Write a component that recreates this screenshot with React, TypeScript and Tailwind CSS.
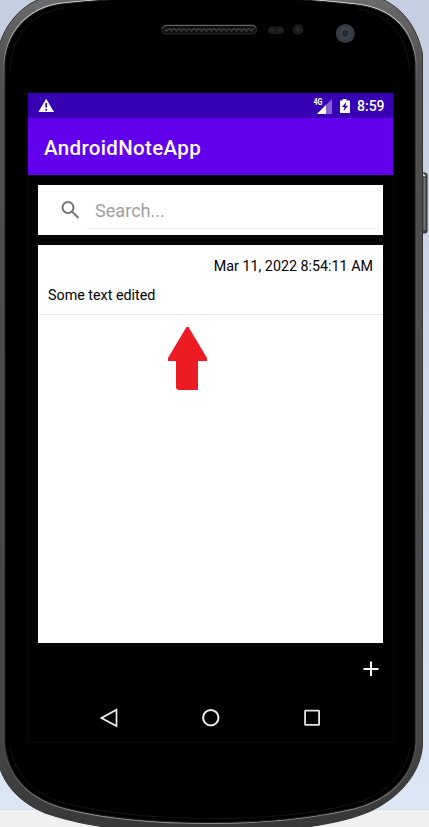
import React from "react";

const OUTER =
  "M-1 46 C5 26 17 10 37 0 C80 -12 120 -14 211 -14 C300 -14 345 -12 384 0 C406 11 418 31 422.5 54 V745 C421 770 404 794 373 810 C345 823 300 831 211 834 C125 833 80 825 45 813 C19 802 5 785 -1 766 Z";
const INNER =
  "M5 62 C8 30 30 8 62 4 C100 0 140 -3 211 -3 C280 -3 320 1 357 5 C391 9 412 29 415 62 V744 C412 778 388 799 354 808 C310 818 265 822.5 211 822.500 C155 822.5 105 818 66 808 C31 799 9 779 5 744 Z";

function PhoneFrame() {
  return (
    <svg className="absolute inset-0" width="429" height="827" viewBox="0 0 429 827" fill="none" aria-hidden="true">
      <defs>
        <linearGradient id="backdrop" x1="0" y1="0" x2="0" y2="1">
          <stop offset="0" stopColor="#c4cee0" />
          <stop offset="1" stopColor="#dce7f5" />
        </linearGradient>
        <linearGradient id="metal" x1="0" y1="0" x2="0" y2="827" gradientUnits="userSpaceOnUse">
          <stop offset="0" stopColor="#6b6b6b" />
          <stop offset="0.08" stopColor="#505050" />
          <stop offset="0.9" stopColor="#454545" />
          <stop offset="1" stopColor="#383838" />
        </linearGradient>
        <linearGradient id="shine" x1="0" y1="0" x2="0" y2="827" gradientUnits="userSpaceOnUse">
          <stop offset="0" stopColor="#d4d4d4" />
          <stop offset="0.05" stopColor="#999" />
          <stop offset="0.1" stopColor="#585858" />
          <stop offset="0.93" stopColor="#545454" />
          <stop offset="0.98" stopColor="#8c8c8c" />
        </linearGradient>
        <pattern id="mesh" width="5" height="4" patternUnits="userSpaceOnUse" x="164" y="28">
          <path d="M0 0l2.5 3L5 0" stroke="#383838" strokeWidth="1.6" />
        </pattern>
      </defs>
      <rect width="429" height="809" fill="url(#backdrop)" />
      <rect y="809" width="429" height="18" fill="#f0f0f0" />
      <path d="M0 809.5H429" stroke="#d5dbe2" />
      <rect x="420" y="173" width="7" height="60" rx="2" fill="#464646" stroke="#303030" />
      <path d="M424.5 178v52" stroke="#737373" strokeWidth="2" />
      <path d="M422 174l3 2" stroke="#ddd" strokeWidth="2" />
      <path d={OUTER} fill="url(#metal)" />
      <path d={OUTER} stroke="#343434" />
      <path d={INNER} fill="#000" stroke="url(#shine)" strokeWidth="3" />
      <path d={INNER} fill="#000" stroke="#191919" strokeWidth="1" />
      <path
        d="M10 70C12 35 33 12 64 8 M358 9C388 14 406 34 410 70 M10 747C15 777 38 797 67 804C112 814 158 818.500 211 818.500C265 818.500 312 814 353 804C384 796 406 775 410 747"
        stroke="#141414"
      />
      <rect x="162" y="25" width="94.500" height="9" rx="4" fill="#101010" stroke="#2b2b2b" />
      <rect x="165" y="28" width="89" height="4" fill="url(#mesh)" />
      <path d="M163 28q1-2.500 4-2.500h85q3 0 4 2.500" stroke="#666" />
      <rect x="268" y="26.500" width="16" height="7.500" rx="3.500" fill="#1c1c1c" />
      <circle cx="272" cy="30" r="1.500" fill="#2b2b2b" />
      <circle cx="280" cy="30" r="1.500" fill="#2b2b2b" />
      <circle cx="298" cy="29.500" r="5.300" fill="#1c1c1c" />
      <circle cx="298" cy="29.500" r="2" fill="#2b2b2b" />
      <circle cx="345.300" cy="33.500" r="9.500" fill="#363a41" />
      <circle cx="345.300" cy="33.500" r="6" fill="#3e444c" />
      <circle cx="345.300" cy="33.500" r="3.300" fill="#252b34" />
      <path d="M27.500 93V742.500H393.500V93" stroke="#0b0b0b" />
    </svg>
  );
}

function StatusBar() {
  return (
    <div className="flex h-[25px] items-center bg-[#3700b3] pl-[10px] pr-[8px] text-white">
      <svg width="17" height="15" viewBox="0 0 17 15">
        <path d="M8.200 .8L16 14H.400Z" fill="white" />
        <path d="M8.200 5v4.500M8.200 11v1.700" stroke="#3700b3" strokeWidth="1.700" />
      </svg>
      <svg className="ml-auto" width="20" height="18" viewBox="0 0 20 18">
        <path d="M19 2V17H4Z" fill="#8660d2" />
        <path d="M13 8V17H4Z" fill="white" />
        <text x="0.500" y="8" fill="white" fontFamily="Roboto, sans-serif" fontWeight="700" fontSize="8.500" textLength="9" lengthAdjust="spacingAndGlyphs">4G</text>
      </svg>
      <svg className="ml-[6px]" width="12" height="16" viewBox="0 0 12 16">
        <path d="M3.500 1h4v1.500H11V15H1V2.500h2.500Z" fill="white" />
        <path d="M7.200 4L3 9h2.500L4.700 13 9 7.800H6.500Z" fill="#3700b3" />
      </svg>
      <span className="ml-[6px] w-[28px] whitespace-nowrap pt-[2px] text-[14px] font-medium leading-[25px]">8:59</span>
    </div>
  );
}

function SearchBox() {
  return (
    <div className="mx-[10px] mt-[10px] flex h-[50px] bg-white pl-[22px] pr-[5px]">
      <svg className="mt-[14px] shrink-0" width="22" height="22" viewBox="0 0 22 22" fill="none" stroke="#737373" strokeWidth="2">
        <circle cx="8" cy="8.500" r="5.500" />
        <path d="M12 12.500L18.500 19" />
      </svg>
      <div className="ml-[5px] h-[44px] flex-1 border-b border-[#f0f0f0] pl-[8px] text-[18.100px] leading-[52px] text-[#a0a0a0]">
        Search...
      </div>
    </div>
  );
}

function NoteList() {
  return (
    <div className="mx-[10px] mt-[10px] h-[398px] bg-white text-[14.300px] text-black">
      <div className="h-[70px] border-b border-[#e4e4e4] px-[10px] pt-[11px]">
        <div className="text-right leading-[21px]">Mar 11, 2022 8:54:11 AM</div>
        <div className="mt-[8px] leading-[20px]">Some text edited</div>
      </div>
      <svg className="ml-[129px] mt-[11px]" width="42" height="65" viewBox="0 0 42 65">
        <path d="M19.500 1h2L40 32v3h-9v29H11l-2-2V35H1v-3Z" fill="#ed1c24" />
      </svg>
    </div>
  );
}

function NavigationBar() {
  return (
    <div className="flex h-[47px] items-center justify-center gap-[81px]">
      <svg width="20" height="20" viewBox="0 0 20 20" fill="none" stroke="#eee" strokeWidth="1.700">
        <path d="M16.500 1.700V18L1.500 10Z" />
      </svg>
      <svg width="20" height="20" viewBox="0 0 20 20" fill="none" stroke="#eee" strokeWidth="2">
        <circle cx="9.800" cy="9.700" r="7.700" />
      </svg>
      <svg width="20" height="20" viewBox="0 0 20 20" fill="none" stroke="#e5e5e5" strokeWidth="1.800">
        <rect x="3.100" y="2.700" width="14" height="14.200" rx=".5" />
      </svg>
    </div>
  );
}

export default function App() {
  return (
    <main className="relative h-[827px] w-[429px] overflow-hidden font-['Roboto',sans-serif]">
      <PhoneFrame />
      <section className="relative ml-[28px] w-[365px] pt-[93px]">
        <StatusBar />
        <header className="h-[57px] bg-[#6200ee] pl-[16px] text-[20.500px] font-medium leading-[60px] tracking-[0.350px] text-white">
          AndroidNoteApp
        </header>
        <SearchBox />
        <NoteList />
        <div className="flex h-[51px] items-center justify-end pr-[14px]">
          <svg width="16" height="16" viewBox="0 0 16 16" stroke="white" strokeWidth="2">
            <path d="M8 .5v14.500M.5 8h15" />
          </svg>
        </div>
        <NavigationBar />
      </section>
    </main>
  );
}
